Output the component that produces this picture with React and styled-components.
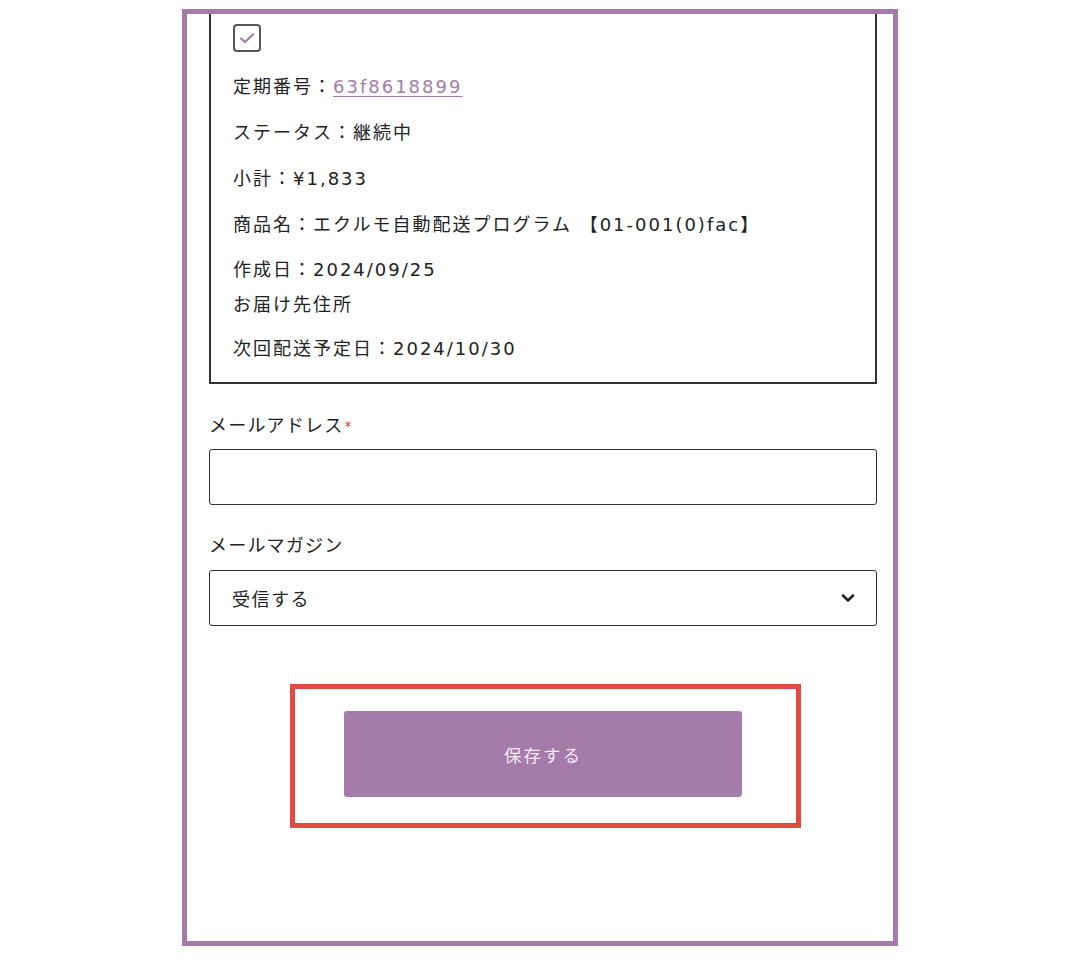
import styled, { createGlobalStyle } from 'styled-components'
import { ChevronDown } from 'lucide-react'

const GlobalStyle = createGlobalStyle`
  html, body {
    margin: 0;
    padding: 0;
    background: #ffffff;
  }
  body {
    font-family: 'DejaVu Sans', 'Noto Sans CJK JP', sans-serif;
    color: #222222;
  }
`

const Page = styled.div`
  padding-top: 9px;
  display: flex;
  justify-content: center;
`

const Frame = styled.div`
  width: 716px;
  height: 937px;
  box-sizing: border-box;
  border: 5px solid #a57ba9;
  overflow: hidden;
  padding: 0 16px 0 22px;
  display: flex;
  flex-direction: column;
`

const Card = styled.div`
  border: 2px solid #333333;
  border-top: none;
  padding: 10px 20px 20px 22px;
  display: flex;
  flex-direction: column;
`

const Checkbox = styled.div`
  width: 28px;
  height: 28px;
  box-sizing: border-box;
  border: 2px solid #555555;
  border-radius: 4px;
  display: flex;
  align-items: center;
  justify-content: center;
`

const Row = styled.p`
  margin: ${(p) => p.$gap ?? 22}px 0 0;
  font-size: 18px;
  line-height: 26px;
  letter-spacing: 2px;
  color: #222222;
  white-space: nowrap;
`

const Link = styled.a`
  color: #a57ba9;
  text-decoration: underline;
  text-underline-offset: 3px;
`

const Label = styled.div`
  margin-top: ${(p) => p.$top}px;
  font-size: 18px;
  line-height: 26px;
  color: #222222;
  letter-spacing: 1.2px;
`

const Required = styled.span`
  color: #d9413a;
  font-size: 14px;
  vertical-align: top;
  margin-left: 1px;
`

const Input = styled.input`
  margin-top: 10px;
  height: 56px;
  box-sizing: border-box;
  border: 1.5px solid #333333;
  border-radius: 3px;
  padding: 0 22px;
  font-size: 18px;
  font-family: inherit;
  outline: none;
`

const SelectBox = styled.div`
  margin-top: 11px;
  height: 56px;
  box-sizing: border-box;
  border: 1.5px solid #333333;
  border-radius: 3px;
  padding: 0 18px 0 22px;
  display: flex;
  align-items: center;
  justify-content: space-between;
  font-size: 18px;
  letter-spacing: 1.5px;
  color: #222222;
`

const Highlight = styled.div`
  margin: 58px 76px 0 81px;
  height: 144px;
  flex-shrink: 0;
  box-sizing: border-box;
  border: 5px solid #e04a40;
  padding: 22px 54px 26px 49px;
  display: flex;
`

const SaveButton = styled.button`
  flex: 1;
  border: none;
  border-radius: 3px;
  background: #a57ba9;
  color: #f3e9f3;
  font-size: 17.5px;
  font-family: 'Noto Sans CJK JP', sans-serif;
  letter-spacing: 2px;
  cursor: pointer;
`

function CheckIcon() {
  return (
    <svg width="18" height="18" viewBox="0 0 18 18" fill="none">
      <path
        d="M3 9.5 L7 13 L15 5.5"
        stroke="#a57ba9"
        strokeWidth="2.2"
        strokeLinecap="round"
        strokeLinejoin="round"
      />
    </svg>
  )
}

export default function App() {
  return (
    <>
      <GlobalStyle />
      <Page>
        <Frame>
          <Card>
            <Checkbox>
              <CheckIcon />
            </Checkbox>
            <Row>
              定期番号：<Link href="#">63f8618899</Link>
            </Row>
            <Row $gap={20}>ステータス：継続中</Row>
            <Row $gap={20}>小計：¥1,833</Row>
            <Row $gap={20}>商品名：エクルモ自動配送プログラム 【01-001(0)fac】</Row>
            <Row $gap={19}>作成日：2024/09/25</Row>
            <Row $gap={9}>お届け先住所</Row>
            <Row $gap={18}>次回配送予定日：2024/10/30</Row>
          </Card>

          <Label $top={29}>
            メールアドレス<Required>*</Required>
          </Label>
          <Input type="email" />

          <Label $top={28}>メールマガジン</Label>
          <SelectBox>
            <span>受信する</span>
            <ChevronDown size={20} strokeWidth={3} color="#222" />
          </SelectBox>

          <Highlight>
            <SaveButton>保存する</SaveButton>
          </Highlight>
        </Frame>
      </Page>
    </>
  )
}
